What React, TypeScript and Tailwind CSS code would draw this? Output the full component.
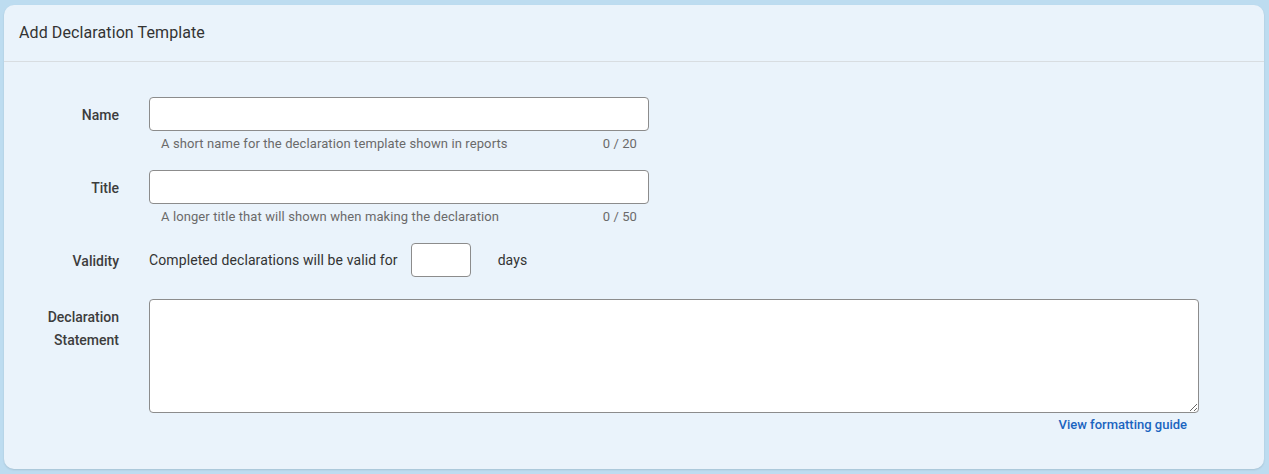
import { useState } from "react";

const Field = ({
  label,
  children,
}: {
  label: React.ReactNode;
  children: React.ReactNode;
}) => (
  <div className="flex">
    <div className="w-[145px] shrink-0 pr-[30px] pt-[7px] text-right text-[14px] leading-[23px] font-medium text-[#3d3d3d]">
      {label}
    </div>
    <div className="flex-1">{children}</div>
  </div>
);

const App = () => {
  const [name, setName] = useState("");
  const [title, setTitle] = useState("");

  return (
    <div
      className="min-h-[474px] bg-[#bddcf0] pt-[5px] px-[4px] pb-[5px]"
      style={{ fontFamily: "Roboto, 'Liberation Sans', sans-serif" }}
    >
      <div className="rounded-[10px] bg-[#eaf3fb] shadow-[0_1px_2px_rgba(0,0,0,0.12)] h-[464px] w-[1260px]">
        <div className="h-[57px] flex items-center px-[15px] border-b border-[#d8dde1] text-[16px] tracking-[0.1px] text-[#333]">
          Add Declaration Template
        </div>

        <div className="pt-[35px] flex flex-col">
          <Field label="Name">
            <input
              value={name}
              onChange={(e) => setName(e.target.value)}
              className="w-[500px] h-[34px] rounded-[4px] border border-[#8c8c8c] bg-white px-3 text-sm outline-none"
            />
            <div className="w-[500px] flex justify-between px-3 mt-[5px] text-[13px] leading-[16px] tracking-[0.1px] text-[#6a6a6a]">
              <span>A short name for the declaration template shown in reports</span>
              <span>{name.length} / 20</span>
            </div>
          </Field>

          <div className="mt-[18px]">
            <Field label="Title">
              <input
                value={title}
                onChange={(e) => setTitle(e.target.value)}
                className="w-[500px] h-[34px] rounded-[4px] border border-[#8c8c8c] bg-white px-3 text-sm outline-none"
              />
              <div className="w-[500px] flex justify-between px-3 mt-[5px] text-[13px] leading-[16px] tracking-[0.1px] text-[#6a6a6a]">
                <span>A longer title that will shown when making the declaration</span>
                <span>{title.length} / 50</span>
              </div>
            </Field>
          </div>

          <div className="mt-[18px]">
            <Field label="Validity">
              <div className="flex items-center h-[34px] text-[14px] tracking-[0.1px] text-[#333]">
                <span>Completed declarations will be valid for</span>
                <input className="ml-[13px] w-[60px] h-[34px] rounded-[4px] border border-[#8c8c8c] bg-white px-2 text-sm outline-none" />
                <span className="ml-[27px]">days</span>
              </div>
            </Field>
          </div>

          <div className="mt-[22px]">
            <Field
              label={
                <>
                  Declaration
                  <br />
                  Statement
                </>
              }
            >
              <div className="w-[1050px] flex flex-col">
                <textarea className="block w-[1050px] h-[114px] rounded-[4px] border border-[#8c8c8c] bg-white px-3 py-2 text-sm outline-none" />
                <a
                  href="#"
                  className="self-end mr-3 mt-[4px] text-[13px] leading-[16px] font-medium text-[#1a64c0]"
                >
                  View formatting guide
                </a>
              </div>
            </Field>
          </div>
        </div>
      </div>
    </div>
  );
};

export default App;
